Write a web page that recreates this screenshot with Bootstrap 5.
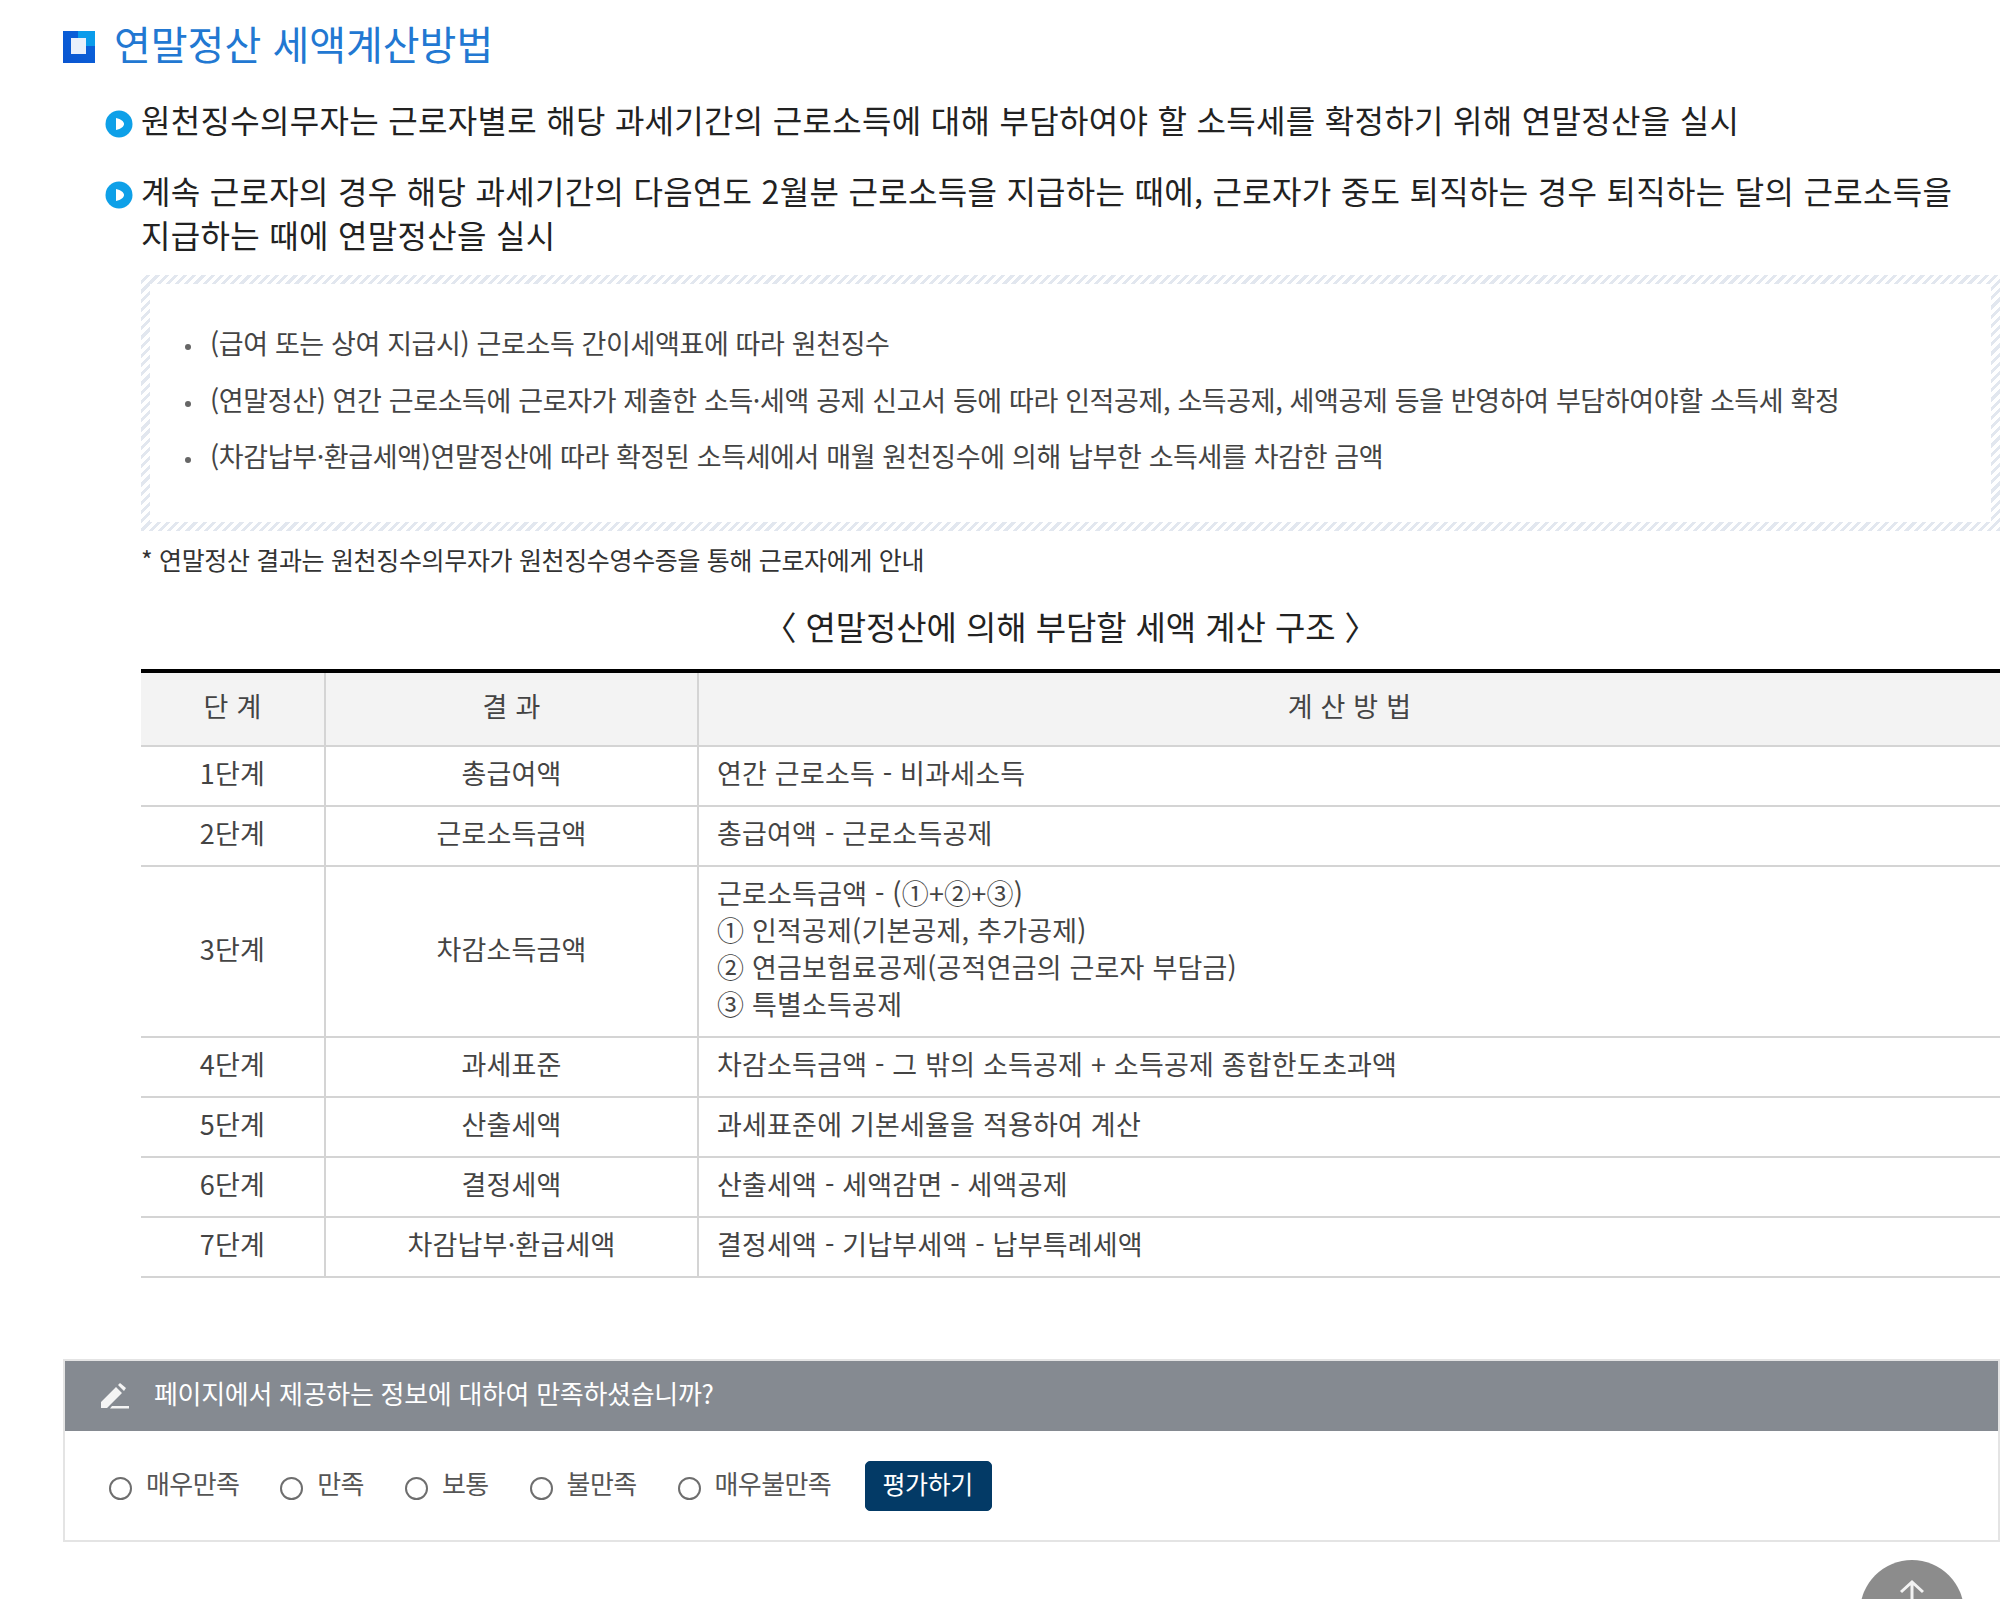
<!DOCTYPE html>
<html lang="ko">
<head>
<meta charset="utf-8">
<title>연말정산 세액계산방법</title>
<link href="https://cdn.jsdelivr.net/npm/bootstrap@5.3.0/dist/css/bootstrap.min.css" rel="stylesheet">
<style>
html,body{height:1599px;overflow:hidden}
body{font-family:"Noto Sans CJK KR","Noto Sans",sans-serif;color:#222;background:#fff;padding:0 0 0 63px;position:relative}
.sec-title{height:32px;margin-top:31px;gap:19px;color:#2278d2;font-size:40px;line-height:32px}
.sec-title svg{flex:none}
.sec-title span{margin-top:-8px}
.lead-item{padding-left:42px;gap:8px;font-size:32px;line-height:44px;color:#222;letter-spacing:.3px}
.lead-item svg{flex:none;margin-top:13px}
.lead-one{margin-top:34px}
.lead-two{margin-top:27px}
.hatch-box{margin:19px 0 0 78px;height:256px;border:9px solid transparent;background:linear-gradient(#fff,#fff) padding-box,repeating-linear-gradient(-45deg,#e2e7ef 0 3px,#fff 3px 6.5px) border-box;padding:31px 0 0 33px;list-style:none;font-size:27px;color:#444;letter-spacing:-.37px}
.hatch-box li{height:56.5px;line-height:56.5px;position:relative;padding-left:27px}
.hatch-box li::before{content:"";width:6px;height:6px;border-radius:50%;background:#666;display:block;position:absolute;left:2px;top:29px}
.note-line{margin:11px 0 0 78px;font-size:25px;line-height:34px;color:#333;letter-spacing:-.34px}
.cap-line{margin:27px 0 0 78px;text-align:center;font-size:33px;line-height:46px;color:#222;letter-spacing:-.1px}
.tax-table{margin:20px 0 0 78px;width:1859px;border-collapse:collapse;table-layout:fixed;font-size:27px;color:#444;letter-spacing:.2px;border-top:4px solid #000}
.tax-table th,.tax-table td{padding:7px 0 14px;line-height:37px;border-bottom:2px solid #d4d4d4;border-left:2px solid #d4d4d4;text-align:center;vertical-align:middle;font-weight:400}
.tax-table th{background:#f3f3f3;padding:14px 0 21px}
.tax-table th:first-child,.tax-table td:first-child{border-left:0}
.tax-table td.calc-cell{text-align:left;padding-left:18px}
.survey-box{margin-top:81px;height:183px;border:2px solid #e4e4e4}
.survey-head{height:70px;background:#858a91;color:#fff;font-size:26px;padding-left:35px;gap:24px;letter-spacing:-.3px}
.survey-head span{margin-top:-8px}
.survey-head svg{flex:none}
.survey-body{height:111px;padding-left:44px;font-size:26px;color:#555;letter-spacing:-.6px}
.survey-opt{gap:14px;margin-right:41px}
.survey-opt .form-check-input{width:23px;height:23px;margin:3px 0 0;border:2px solid #6e6e6e;background:#fff;box-shadow:none;flex:none}
.survey-opt span{margin-top:-8px}
.go-btn{width:127px;height:50px;background:#033a66;border-color:#033a66;color:#fff;font-size:25px;padding:0 2px 6px 0;margin-left:-7px;margin-top:-2px;border-radius:5px;letter-spacing:-.4px;line-height:40px}
.top-btn{position:absolute;left:1860px;top:1560px;width:104px;height:104px;background:#8c8c8c;border-radius:50%;padding:18px 0 0 32px}
</style>
</head>
<body>
<h2 class="sec-title d-flex align-items-center fw-normal mb-0">
<svg width="32" height="32" viewBox="0 0 32 32"><defs><linearGradient id="g" x1="0" y1="1" x2="1" y2="0"><stop offset="0" stop-color="#0a55d0"/><stop offset="1" stop-color="#0a64dc"/></linearGradient></defs><rect width="32" height="32" fill="url(#g)"/><rect x="15" width="17" height="15" fill="#0a9ceb"/><rect x="8" y="7" width="15" height="16" fill="#e9f0fb"/></svg>
<span>연말정산 세액계산방법</span>
</h2>
<div class="lead-item lead-one d-flex">
<svg width="28" height="28" viewBox="0 0 28 28"><circle cx="14" cy="14" r="13.5" fill="#0ea0e8"/><path d="M11 8c5 1 8 3.500 8 6s-3 5-8 6z" fill="#fff"/></svg>
<div>원천징수의무자는 근로자별로 해당 과세기간의 근로소득에 대해 부담하여야 할 소득세를 확정하기 위해 연말정산을 실시</div>
</div>
<div class="lead-item lead-two d-flex">
<svg width="28" height="28" viewBox="0 0 28 28"><circle cx="14" cy="14" r="13.5" fill="#0ea0e8"/><path d="M11 8c5 1 8 3.500 8 6s-3 5-8 6z" fill="#fff"/></svg>
<div>계속 근로자의 경우 해당 과세기간의 다음연도 2월분 근로소득을 지급하는 때에, 근로자가 중도 퇴직하는 경우 퇴직하는 달의 근로소득을<br>지급하는 때에 연말정산을 실시</div>
</div>
<ul class="hatch-box">
<li>(급여 또는 상여 지급시) 근로소득 간이세액표에 따라 원천징수</li>
<li>(연말정산) 연간 근로소득에 근로자가 제출한 소득·세액 공제 신고서 등에 따라 인적공제, 소득공제, 세액공제 등을 반영하여 부담하여야할 소득세 확정</li>
<li>(차감납부·환급세액)연말정산에 따라 확정된 소득세에서 매월 원천징수에 의해 납부한 소득세를 차감한 금액</li>
</ul>
<p class="note-line mb-0">* 연말정산 결과는 원천징수의무자가 원천징수영수증을 통해 근로자에게 안내</p>
<p class="cap-line mb-0">〈 연말정산에 의해 부담할 세액 계산 구조 〉</p>
<table class="tax-table">
<colgroup><col style="width:184px"><col style="width:373px"><col></colgroup>
<thead><tr><th>단 계</th><th>결 과</th><th>계 산 방 법</th></tr></thead>
<tbody>
<tr><td>1단계</td><td>총급여액</td><td class="calc-cell">연간 근로소득 - 비과세소득</td></tr>
<tr><td>2단계</td><td>근로소득금액</td><td class="calc-cell">총급여액 - 근로소득공제</td></tr>
<tr><td>3단계</td><td>차감소득금액</td><td class="calc-cell">근로소득금액 - (①+②+③)<br>① 인적공제(기본공제, 추가공제)<br>② 연금보험료공제(공적연금의 근로자 부담금)<br>③ 특별소득공제</td></tr>
<tr><td>4단계</td><td>과세표준</td><td class="calc-cell">차감소득금액 - 그 밖의 소득공제 + 소득공제 종합한도초과액</td></tr>
<tr><td>5단계</td><td>산출세액</td><td class="calc-cell">과세표준에 기본세율을 적용하여 계산</td></tr>
<tr><td>6단계</td><td>결정세액</td><td class="calc-cell">산출세액 - 세액감면 - 세액공제</td></tr>
<tr><td>7단계</td><td>차감납부·환급세액</td><td class="calc-cell">결정세액 - 기납부세액 - 납부특례세액</td></tr>
</tbody>
</table>
<div class="survey-box">
<div class="survey-head d-flex align-items-center">
<svg width="30" height="26" viewBox="0 0 30 26"><path d="M1 25v-6L16 4l6 6L7 25zM18 2l2-2 6 5-2 3zM12 23h17v2.500H10z" fill="#f4f4f4"/></svg>
<span>페이지에서 제공하는 정보에 대하여 만족하셨습니까?</span>
</div>
<form class="survey-body d-flex align-items-center">
<label class="survey-opt d-flex align-items-center"><input class="form-check-input" type="radio" name="sat"><span>매우만족</span></label>
<label class="survey-opt d-flex align-items-center"><input class="form-check-input" type="radio" name="sat"><span>만족</span></label>
<label class="survey-opt d-flex align-items-center"><input class="form-check-input" type="radio" name="sat"><span>보통</span></label>
<label class="survey-opt d-flex align-items-center"><input class="form-check-input" type="radio" name="sat"><span>불만족</span></label>
<label class="survey-opt d-flex align-items-center"><input class="form-check-input" type="radio" name="sat"><span>매우불만족</span></label>
<button type="button" class="btn go-btn">평가하기</button>
</form>
</div>
<a class="top-btn d-block" href="#" aria-label="top"><svg width="40" height="40" viewBox="0 0 40 40"><path d="M20 4v36M9 14 20 4l11 10" fill="none" stroke="#f2f2f2" stroke-width="3"/></svg></a>
<script src="https://cdn.jsdelivr.net/npm/bootstrap@5.3.0/dist/js/bootstrap.bundle.min.js"></script>
</body>
</html>
